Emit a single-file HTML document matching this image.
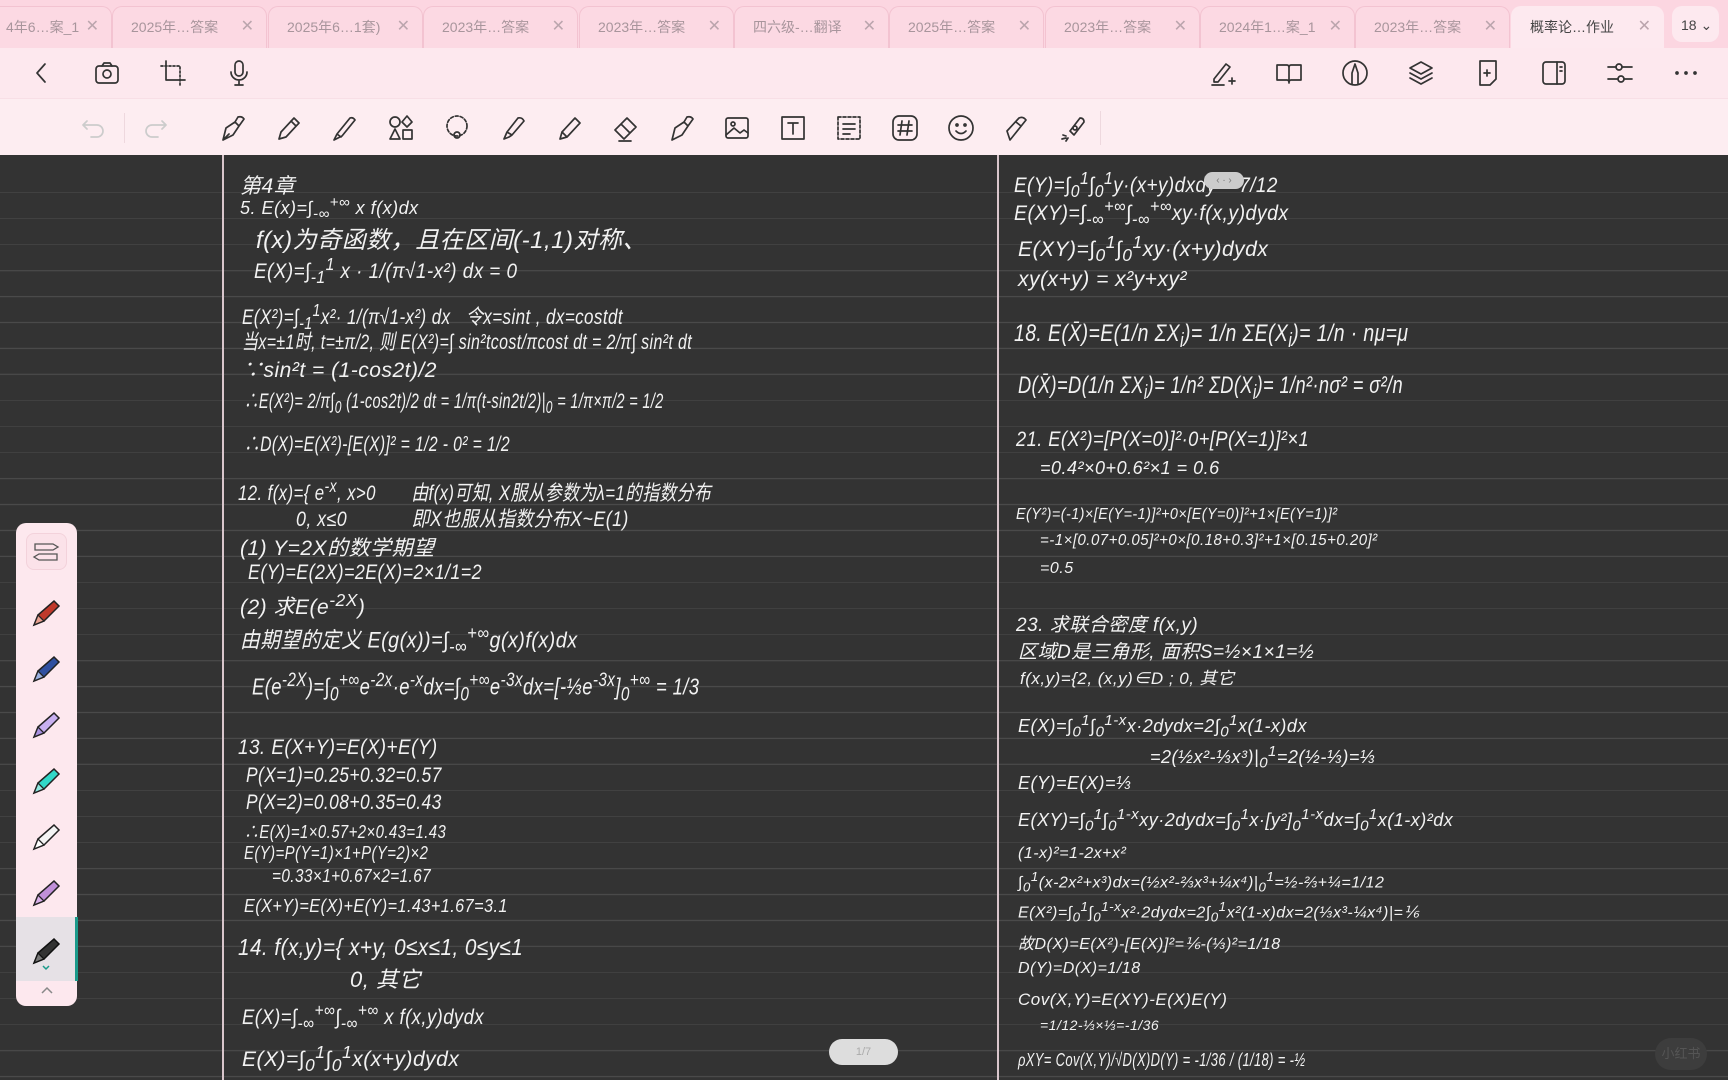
<!DOCTYPE html>
<html><head><meta charset="utf-8"><style>
*{margin:0;padding:0;box-sizing:border-box}
body{width:1728px;height:1080px;overflow:hidden;background:#333;font-family:"Liberation Sans","Noto Sans CJK SC",sans-serif;position:relative}
.tabs{position:absolute;left:0;top:0;width:1728px;height:48px;background:#fcd6e1}
.tab{position:absolute;top:6px;height:42px;border:1px solid #f3c3d1;border-bottom:none;border-radius:10px 10px 0 0;background:#fcd9e3;color:#a8959c;font-size:14px;line-height:40px;padding-left:18px;white-space:nowrap;overflow:hidden}
.tab .x{position:absolute;right:12px;top:0;color:#bba5ad;font-size:16px}
.tab.act{background:#fde9ef;color:#444;border-color:#fde9ef}
.row1{position:absolute;left:0;top:48px;width:1728px;height:50px;background:#fde8ee}
.row2{position:absolute;left:0;top:98px;width:1728px;height:57px;background:#fdedf1;border-top:1px solid #f8dfe6}
.ic{position:absolute;width:30px;height:30px;transform:translate(-15px,-15px)}
.ic svg{width:30px;height:30px;fill:none;stroke:#333;stroke-width:1.7;stroke-linecap:round;stroke-linejoin:round}
.canvas{position:absolute;left:0;top:155px;width:1728px;height:925px;background:#333;
background-image:repeating-linear-gradient(to bottom,transparent 0,transparent 25px,#4a4a4a 25px,#4a4a4a 26px);background-position:0 12px}
.vl{position:absolute;top:155px;height:925px;width:2px;background:#d9c6cc}
.t{position:absolute;color:#f2f2f2;font-size:21px;white-space:nowrap;font-style:italic;letter-spacing:.5px;transform-origin:left center}
.pal{position:absolute;left:16px;top:523px;width:61px;height:483px;background:#fde8ee;border-radius:10px}
.pen{position:absolute;left:14px;width:34px;height:34px}
.pill{position:absolute;left:829px;top:1039px;width:69px;height:26px;border-radius:13px;background:#ddd;color:#aaa;font-size:11px;text-align:center;line-height:26px}
</style></head><body>
<div class="tabs">
<div class="tab" style="left:-40px;width:152px;padding-left:45px">4年6…案_1<span class="x">✕</span></div>
<div class="tab" style="left:112px;width:155px">2025年…答案<span class="x">✕</span></div>
<div class="tab" style="left:268px;width:155px">2025年6…1套)<span class="x">✕</span></div>
<div class="tab" style="left:423px;width:155px">2023年…答案<span class="x">✕</span></div>
<div class="tab" style="left:579px;width:155px">2023年…答案<span class="x">✕</span></div>
<div class="tab" style="left:734px;width:155px">四六级-…翻译<span class="x">✕</span></div>
<div class="tab" style="left:889px;width:155px">2025年…答案<span class="x">✕</span></div>
<div class="tab" style="left:1045px;width:155px">2023年…答案<span class="x">✕</span></div>
<div class="tab" style="left:1200px;width:155px">2024年1…案_1<span class="x">✕</span></div>
<div class="tab" style="left:1355px;width:155px">2023年…答案<span class="x">✕</span></div>
<div class="tab act" style="left:1511px;width:153px">概率论…作业<span class="x">✕</span></div>
<div class="tab act" style="left:1672px;width:47px;border-radius:10px;height:36px;line-height:36px;padding-left:8px;top:6px">18 ⌄</div>
</div>
<div class="row1">
<div class="ic" style="left:41px;top:25px"><svg viewBox="0 0 30 30"><path d="M19 6 L11 15 L19 24"/></svg></div>
<div class="ic" style="left:107px;top:25px"><svg viewBox="0 0 30 30"><rect x="4" y="8" width="22" height="17" rx="3"/><path d="M10 8 L12 5 H18 L20 8"/><circle cx="15" cy="16" r="4"/></svg></div>
<div class="ic" style="left:173px;top:25px"><svg viewBox="0 0 30 30"><path d="M8 3 V22 H27"/><path d="M3 8 H22 V27" stroke-dasharray="2 2"/></svg></div>
<div class="ic" style="left:239px;top:25px"><svg viewBox="0 0 30 30"><rect x="11" y="3" width="8" height="15" rx="4"/><path d="M7 14 A8 8 0 0 0 23 14 M15 22 V27 M11 27 H19"/></svg></div>
<div class="ic" style="left:1223px;top:25px"><svg viewBox="0 0 30 30"><path d="M6 21 L18 6 L22 9 L10 24 H6 Z M4 27 H16 M24 20 V26 M21 23 H27"/></svg></div>
<div class="ic" style="left:1289px;top:25px"><svg viewBox="0 0 30 30"><path d="M3 7 H13 Q15 7 15 10 V25 Q15 22 13 22 H3 Z M27 7 H17 Q15 7 15 10 V25 Q15 22 17 22 H27 Z"/></svg></div>
<div class="ic" style="left:1355px;top:25px"><svg viewBox="0 0 30 30"><circle cx="15" cy="15" r="12"/><path d="M12 26 V15 L15 6 L18 15 V26"/></svg></div>
<div class="ic" style="left:1421px;top:25px"><svg viewBox="0 0 30 30"><path d="M15 4 L26 10 L15 16 L4 10 Z M4 15 L15 21 L26 15 M4 20 L15 26 L26 20"/></svg></div>
<div class="ic" style="left:1488px;top:25px"><svg viewBox="0 0 30 30"><path d="M7 3 H23 V21 L17 27 H7 Z M11 15 H17 M14 12 V18"/></svg></div>
<div class="ic" style="left:1554px;top:25px"><svg viewBox="0 0 30 30"><rect x="4" y="4" width="22" height="22" rx="3"/><path d="M18 4 V26 M21 9 H23 M21 13 H23"/></svg></div>
<div class="ic" style="left:1620px;top:25px"><svg viewBox="0 0 30 30"><path d="M3 9 H11 M17 9 H27 M3 21 H13 M19 21 H27"/><circle cx="14" cy="9" r="3"/><circle cx="16" cy="21" r="3"/></svg></div>
<div class="ic" style="left:1686px;top:25px"><svg viewBox="0 0 30 30"><circle cx="6" cy="15" r="1" fill="#333"/><circle cx="15" cy="15" r="1" fill="#333"/><circle cx="24" cy="15" r="1" fill="#333"/></svg></div>
</div>
<div class="row2">
<div class="ic" style="left:94px;top:29px"><svg viewBox="0 0 30 30" style="stroke:#ccc"><path d="M8 8 L4 12 L8 16 M4 12 H18 A6 6 0 0 1 18 24 H12"/></svg></div>
<div style="position:absolute;left:124px;top:14px;width:1px;height:30px;background:#eed8de"></div>
<div class="ic" style="left:155px;top:29px"><svg viewBox="0 0 30 30" style="stroke:#ccc"><path d="M22 8 L26 12 L22 16 M26 12 H12 A6 6 0 0 0 12 24 H18"/></svg></div>
<div class="ic" style="left:233px;top:29px"><svg viewBox="0 0 30 30"><path d="M5 27 L8 15 L17 9 L21 13 L15 22 Z M5 27 L11 21 M17 9 L20 4 Q24 3 26 6 L21 13"/></svg></div>
<div class="ic" style="left:289px;top:29px"><svg viewBox="0 0 30 30"><path d="M5 26 L7 19 L20 5 L25 10 L12 24 Z M17 8 L22 13"/></svg></div>
<div class="ic" style="left:345px;top:29px"><svg viewBox="0 0 30 30"><path d="M4 27 L7 21 L20 5 Q23 4 25 7 L12 23 Z M7 21 L11 24"/></svg></div>
<div class="ic" style="left:401px;top:29px"><svg viewBox="0 0 30 30"><circle cx="9" cy="9" r="5"/><path d="M21 3 L26 9 L21 14 L16 9 Z M9 16 L14 26 H4 Z"/><rect x="17" y="17" width="9" height="9"/></svg></div>
<div class="ic" style="left:457px;top:29px"><svg viewBox="0 0 30 30"><circle cx="15" cy="13" r="10" stroke-dasharray="3 2"/><circle cx="15" cy="22" r="3"/></svg></div>
<div class="ic" style="left:514px;top:29px"><svg viewBox="0 0 30 30"><path d="M5 26 L8 19 L19 5 Q23 4 25 8 L13 22 L10 24 Z M8 19 L13 22"/></svg></div>
<div class="ic" style="left:570px;top:29px"><svg viewBox="0 0 30 30"><path d="M5 26 L7 19 L20 5 L25 10 L12 24 Z M7 19 L12 24"/></svg></div>
<div class="ic" style="left:626px;top:29px"><svg viewBox="0 0 30 30"><path d="M4 17 L16 5 L25 14 L13 26 Z M10 11 L19 20 M8 28 H20"/></svg></div>
<div class="ic" style="left:682px;top:29px"><svg viewBox="0 0 30 30"><path d="M5 27 L8 15 L17 9 L21 13 L15 22 Z M17 9 L20 4 Q24 3 26 6 L21 13"/></svg></div>
<div class="ic" style="left:737px;top:29px"><svg viewBox="0 0 30 30"><rect x="4" y="5" width="22" height="20" rx="2"/><circle cx="11" cy="11" r="2"/><path d="M4 22 L12 15 L18 20 L22 17 L26 20"/></svg></div>
<div class="ic" style="left:793px;top:29px"><svg viewBox="0 0 30 30"><rect x="4" y="4" width="22" height="22"/><path d="M10 10 H20 M15 10 V21"/></svg></div>
<div class="ic" style="left:849px;top:29px"><svg viewBox="0 0 30 30"><rect x="4" y="4" width="22" height="22" stroke-dasharray="3 2"/><path d="M9 11 H21 M9 16 H21 M9 21 H16"/></svg></div>
<div class="ic" style="left:905px;top:29px"><svg viewBox="0 0 30 30"><rect x="3" y="3" width="24" height="24" rx="6"/><path d="M12 8 L10 22 M19 8 L17 22 M8 12 H22 M8 18 H22"/></svg></div>
<div class="ic" style="left:961px;top:29px"><svg viewBox="0 0 30 30"><circle cx="15" cy="15" r="12"/><path d="M10 18 Q15 23 20 18"/><circle cx="11" cy="12" r="1"/><circle cx="19" cy="12" r="1"/></svg></div>
<div class="ic" style="left:1017px;top:29px"><svg viewBox="0 0 30 30"><path d="M8 27 L5 18 L17 5 Q21 3 24 7 L12 22 Z M14 9 L19 13"/></svg></div>
<div class="ic" style="left:1073px;top:29px"><svg viewBox="0 0 30 30"><path d="M12 18 L22 5 Q26 5 26 9 L16 22 Z M5 22 L8 23 M4 26 L8 25 M8 28 L10 25"/><circle cx="17" cy="15" r="2"/></svg></div>
<div style="position:absolute;left:1100px;top:12px;width:1px;height:34px;background:#eed8de"></div>
</div>
<div class="canvas"></div>
<div class="vl" style="left:222px"></div>
<div class="vl" style="left:997px"></div>

<div class="t" style="left:240px;top:170px">第4章</div>
<div class="t" style="left:240px;top:194px;font-size:18px">5. E(x)=∫<sub>-∞</sub><sup>+∞</sup> x f(x)dx</div>
<div class="t" style="left:256px;top:220px;font-size:24px">f(x)为奇函数，且在区间(-1,1)对称、</div>
<div class="t" style="left:254px;top:254px;transform:scaleX(.9)">E(X)=∫<sub>-1</sub><sup>1</sup> x · 1/(π√1-x²) dx = 0</div>
<div class="t" style="left:242px;top:300px;transform:scaleX(.81)">E(X²)=∫<sub>-1</sub><sup>1</sup>x²· 1/(π√1-x²) dx &nbsp;&nbsp;令x=sint , dx=costdt</div>
<div class="t" style="left:242px;top:326px;transform:scaleX(.76)">当x=±1时, t=±π/2, 则 E(X²)=∫ sin²tcost/πcost dt = 2/π∫ sin²t dt</div>
<div class="t" style="left:242px;top:354px">∵sin²t = (1-cos2t)/2</div>
<div class="t" style="left:244px;top:385px;transform:scaleX(.69)">∴E(X²)= 2/π∫<sub>0</sub> (1-cos2t)/2 dt = 1/π(t-sin2t/2)|<sub>0</sub> = 1/π×π/2 = 1/2</div>
<div class="t" style="left:244px;top:428px;transform:scaleX(.75)">∴D(X)=E(X²)-[E(X)]² = 1/2 - 0² = 1/2</div>
<div class="t" style="left:238px;top:476px;transform:scaleX(.8)">12. f(x)={ e<sup>-x</sup>, x&gt;0 &nbsp;&nbsp;&nbsp;&nbsp;&nbsp;&nbsp;由f(x)可知, X服从参数为λ=1的指数分布</div>
<div class="t" style="left:296px;top:503px;transform:scaleX(.85)">0, x≤0 &nbsp;&nbsp;&nbsp;&nbsp;&nbsp;&nbsp;&nbsp;&nbsp;&nbsp;&nbsp;&nbsp;即X也服从指数分布X~E(1)</div>
<div class="t" style="left:240px;top:532px">(1) Y=2X的数学期望</div>
<div class="t" style="left:248px;top:561px;transform:scaleX(.85)">E(Y)=E(2X)=2E(X)=2×1/1=2</div>
<div class="t" style="left:240px;top:590px">(2) 求E(e<sup>-2X</sup>)</div>
<div class="t" style="left:240px;top:622px;font-size:22px;transform:scaleX(.9)">由期望的定义 E(g(x))=∫<sub>-∞</sub><sup>+∞</sup>g(x)f(x)dx</div>
<div class="t" style="left:252px;top:670px;font-size:23px;transform:scaleX(.8)">E(e<sup>-2X</sup>)=∫<sub>0</sub><sup>+∞</sup>e<sup>-2x</sup>·e<sup>-x</sup>dx=∫<sub>0</sub><sup>+∞</sup>e<sup>-3x</sup>dx=[-⅓e<sup>-3x</sup>]<sub>0</sub><sup>+∞</sup> = 1/3</div>
<div class="t" style="left:238px;top:736px;transform:scaleX(.9)">13. E(X+Y)=E(X)+E(Y)</div>
<div class="t" style="left:246px;top:764px;transform:scaleX(.83)">P(X=1)=0.25+0.32=0.57</div>
<div class="t" style="left:246px;top:791px;transform:scaleX(.83)">P(X=2)=0.08+0.35=0.43</div>
<div class="t" style="left:244px;top:818px;font-size:18px;transform:scaleX(.83)">∴E(X)=1×0.57+2×0.43=1.43</div>
<div class="t" style="left:244px;top:843px;font-size:18px;transform:scaleX(.83)">E(Y)=P(Y=1)×1+P(Y=2)×2</div>
<div class="t" style="left:272px;top:866px;font-size:18px;transform:scaleX(.85)">=0.33×1+0.67×2=1.67</div>
<div class="t" style="left:244px;top:896px;font-size:18px;transform:scaleX(.9)">E(X+Y)=E(X)+E(Y)=1.43+1.67=3.1</div>
<div class="t" style="left:238px;top:934px;font-size:23px;transform:scaleX(.9)">14. f(x,y)={ x+y, 0≤x≤1, 0≤y≤1</div>
<div class="t" style="left:350px;top:962px;font-size:22px">0, 其它</div>
<div class="t" style="left:242px;top:1000px;transform:scaleX(.88)">E(X)=∫<sub>-∞</sub><sup>+∞</sup>∫<sub>-∞</sub><sup>+∞</sup> x f(x,y)dydx</div>
<div class="t" style="left:242px;top:1042px">E(X)=∫<sub>0</sub><sup>1</sup>∫<sub>0</sub><sup>1</sup>x(x+y)dydx</div>

<div class="t" style="left:1014px;top:168px;transform:scaleX(.9)">E(Y)=∫<sub>0</sub><sup>1</sup>∫<sub>0</sub><sup>1</sup>y·(x+y)dxdy = 7/12</div>
<div style="position:absolute;left:1204px;top:172px;width:40px;height:17px;border-radius:9px;background:#ccc;color:#777;font-size:10px;text-align:center;line-height:17px">‹ · ›</div>
<div class="t" style="left:1014px;top:196px;transform:scaleX(.93)">E(XY)=∫<sub>-∞</sub><sup>+∞</sup>∫<sub>-∞</sub><sup>+∞</sup>xy·f(x,y)dydx</div>
<div class="t" style="left:1018px;top:232px">E(XY)=∫<sub>0</sub><sup>1</sup>∫<sub>0</sub><sup>1</sup>xy·(x+y)dydx</div>
<div class="t" style="left:1018px;top:268px">xy(x+y) = x²y+xy²</div>
<div class="t" style="left:1014px;top:320px;font-size:24px;transform:scaleX(.81)">18. E(X̄)=E(1/n ΣX<sub>i</sub>)= 1/n ΣE(X<sub>i</sub>)= 1/n · nμ=μ</div>
<div class="t" style="left:1018px;top:372px;font-size:24px;transform:scaleX(.76)">D(X̄)=D(1/n ΣX<sub>i</sub>)= 1/n² ΣD(X<sub>i</sub>)= 1/n²·nσ² = σ²/n</div>
<div class="t" style="left:1016px;top:428px;transform:scaleX(.87)">21. E(X²)=[P(X=0)]²·0+[P(X=1)]²×1</div>
<div class="t" style="left:1040px;top:458px;font-size:18px">=0.4²×0+0.6²×1 = 0.6</div>
<div class="t" style="left:1016px;top:506px;font-size:16px;transform:scaleX(.9)">E(Y²)=(-1)×[E(Y=-1)]²+0×[E(Y=0)]²+1×[E(Y=1)]²</div>
<div class="t" style="left:1040px;top:532px;font-size:16px;transform:scaleX(.94)">=-1×[0.07+0.05]²+0×[0.18+0.3]²+1×[0.15+0.20]²</div>
<div class="t" style="left:1040px;top:560px;font-size:16px">=0.5</div>
<div class="t" style="left:1016px;top:610px;font-size:19px">23. 求联合密度 f(x,y)</div>
<div class="t" style="left:1018px;top:637px;font-size:19px">区域D是三角形, 面积S=½×1×1=½</div>
<div class="t" style="left:1020px;top:664px;font-size:17px">f(x,y)={2, (x,y)∈D ; 0, 其它</div>
<div class="t" style="left:1018px;top:712px;font-size:18px">E(X)=∫<sub>0</sub><sup>1</sup>∫<sub>0</sub><sup>1-x</sup>x·2dydx=2∫<sub>0</sub><sup>1</sup>x(1-x)dx</div>
<div class="t" style="left:1150px;top:743px;font-size:18px">=2(½x²-⅓x³)|<sub>0</sub><sup>1</sup>=2(½-⅓)=⅓</div>
<div class="t" style="left:1018px;top:773px;font-size:18px">E(Y)=E(X)=⅓</div>
<div class="t" style="left:1018px;top:806px;font-size:18px">E(XY)=∫<sub>0</sub><sup>1</sup>∫<sub>0</sub><sup>1-x</sup>xy·2dydx=∫<sub>0</sub><sup>1</sup>x·[y²]<sub>0</sub><sup>1-x</sup>dx=∫<sub>0</sub><sup>1</sup>x(1-x)²dx</div>
<div class="t" style="left:1018px;top:845px;font-size:16px">(1-x)²=1-2x+x²</div>
<div class="t" style="left:1018px;top:869px;font-size:16px">∫<sub>0</sub><sup>1</sup>(x-2x²+x³)dx=(½x²-⅔x³+¼x⁴)|<sub>0</sub><sup>1</sup>=½-⅔+¼=1/12</div>
<div class="t" style="left:1018px;top:899px;font-size:16px">E(X²)=∫<sub>0</sub><sup>1</sup>∫<sub>0</sub><sup>1-x</sup>x²·2dydx=2∫<sub>0</sub><sup>1</sup>x²(1-x)dx=2(⅓x³-¼x⁴)|=⅙</div>
<div class="t" style="left:1018px;top:930px;font-size:16px">故D(X)=E(X²)-[E(X)]²=⅙-(⅓)²=1/18</div>
<div class="t" style="left:1018px;top:960px;font-size:16px">D(Y)=D(X)=1/18</div>
<div class="t" style="left:1018px;top:990px;font-size:17px">Cov(X,Y)=E(XY)-E(X)E(Y)</div>
<div class="t" style="left:1040px;top:1017px;font-size:14px">=1/12-⅓×⅓=-1/36</div>
<div class="t" style="left:1018px;top:1050px;font-size:18px;transform:scaleX(.72)">ρXY= Cov(X,Y)/√D(X)D(Y) = -1/36 / (1/18) = -½</div>

<div class="pill">1/7</div>
<div style="position:absolute;left:1655px;top:1038px;width:52px;height:32px;border-radius:16px;background:#3d3d3d;color:#555;font-size:13px;text-align:center;line-height:32px">小红书</div>

<div class="pal">
<div style="position:absolute;left:10px;top:10px;width:41px;height:37px;border-radius:8px;background:#fbe2e9;border:1px solid #f3d2db"></div>
<svg style="position:absolute;left:15px;top:19px" width="30" height="20" viewBox="0 0 30 20" fill="none" stroke="#555" stroke-width="1.3"><path d="M4 2 H22 L27 5 L22 8 H4 Z M26 12 H8 L3 15 L8 18 H26 Z"/></svg>
<div style="position:absolute;left:0;top:394px;width:61px;height:64px;background:#e6e1e6"></div>
<div style="position:absolute;left:59px;top:394px;width:3px;height:64px;background:#1a9a8a"></div>
<svg class="pen" style="top:72px" viewBox="0 0 34 34"><path d="M4 30 L8 20 L24 6 L29 11 L14 26 Z" fill="#c0392b" stroke="#222" stroke-width="1.5"/><path d="M4 30 L8 20 L14 26 Z" fill="#e8a090" stroke="#222" stroke-width="1.3"/></svg>
<svg class="pen" style="top:128px" viewBox="0 0 34 34"><path d="M4 30 L8 20 L24 6 L29 11 L14 26 Z" fill="#3050a0" stroke="#222" stroke-width="1.5"/><path d="M4 30 L8 20 L14 26 Z" fill="#9ab0e0" stroke="#222" stroke-width="1.3"/></svg>
<svg class="pen" style="top:184px" viewBox="0 0 34 34"><path d="M4 30 L8 20 L24 6 L29 11 L14 26 Z" fill="#c8b0f0" stroke="#222" stroke-width="1.5"/><path d="M4 30 L8 20 L14 26 Z" fill="#a890e0" stroke="#222" stroke-width="1.3"/></svg>
<svg class="pen" style="top:240px" viewBox="0 0 34 34"><path d="M4 30 L8 20 L24 6 L29 11 L14 26 Z" fill="#30d8c8" stroke="#222" stroke-width="1.5"/><path d="M4 30 L8 20 L14 26 Z" fill="#90e8e0" stroke="#222" stroke-width="1.3"/></svg>
<svg class="pen" style="top:296px" viewBox="0 0 34 34"><path d="M4 30 L8 20 L24 6 L29 11 L14 26 Z" fill="#f4f4f4" stroke="#222" stroke-width="1.5"/><path d="M4 30 L8 20 L14 26 Z" fill="#fff" stroke="#222" stroke-width="1.3"/></svg>
<svg class="pen" style="top:352px" viewBox="0 0 34 34"><path d="M4 30 L8 20 L24 6 L29 11 L14 26 Z" fill="#c090d8" stroke="#222" stroke-width="1.5"/><path d="M4 30 L8 20 L14 26 Z" fill="#d8b0e8" stroke="#222" stroke-width="1.3"/></svg>
<svg class="pen" style="top:410px" viewBox="0 0 34 34"><path d="M4 30 L8 20 L24 6 L29 11 L14 26 Z" fill="#333" stroke="#111" stroke-width="1.5"/><path d="M4 30 L8 20 L14 26 Z" fill="#777" stroke="#111" stroke-width="1.3"/></svg>
<svg style="position:absolute;left:20px;top:440px" width="20" height="10" viewBox="0 0 20 10" fill="none" stroke="#1a9a8a" stroke-width="1.5"><path d="M7 3 L10 6 L13 3"/></svg>
<svg style="position:absolute;left:21px;top:462px" width="20" height="12" viewBox="0 0 20 12" fill="none" stroke="#888" stroke-width="1.5"><path d="M5 8 L10 3 L15 8"/></svg>
</div>
</body></html>
